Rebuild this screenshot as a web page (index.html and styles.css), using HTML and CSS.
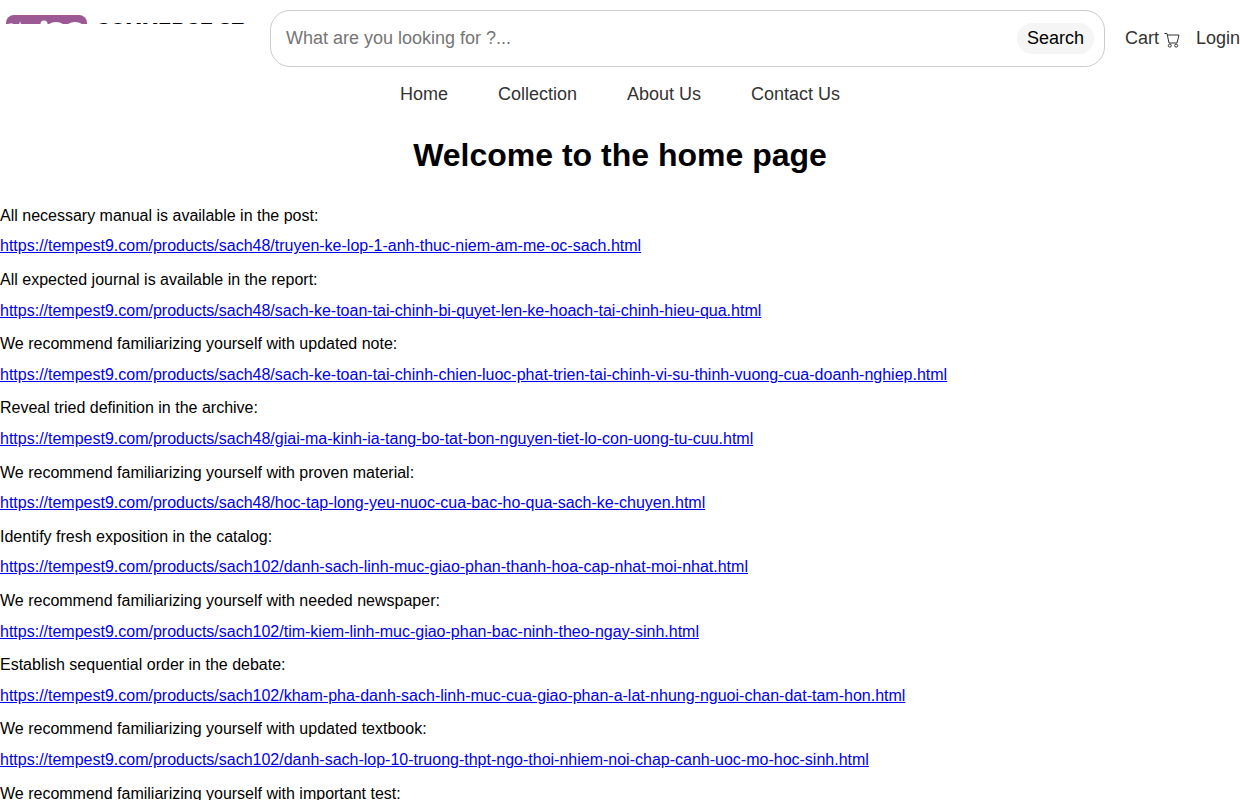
FILE: index.html
```html
<!DOCTYPE html>
<html lang="en">
<head>
<meta charset="utf-8">
<title>Welcome to the home page</title>
<link rel="stylesheet" href="styles.css">
</head>
<body>
<header class="site-header">
  <a class="logo" href="#">
    <svg class="logo-mark" width="81" height="40" viewBox="0 0 81 40" aria-hidden="true">
      <rect x="0" y="0" width="81" height="40" rx="8" fill="#9b5a94"/>
      <path d="M4.5 8.5 L8.5 30 L14 13 L19 30 L24 10" fill="none" stroke="#fff" stroke-width="4"/>
      <circle cx="38" cy="9" r="3.5" fill="#fff"/>
      <circle cx="50" cy="20" r="10" fill="none" stroke="#fff" stroke-width="6"/>
      <circle cx="69" cy="20" r="10" fill="none" stroke="#fff" stroke-width="6"/>
    </svg>
    <span class="logo-text">COMMERCE ST</span>
  </a>
  <form class="search">
    <input class="search-input" type="text" placeholder="What are you looking for ?...">
    <button class="search-button" type="button">Search</button>
  </form>
  <div class="account">
    <a class="account-link" href="#">Cart
      <svg class="cart-icon" width="16" height="16" viewBox="0 0 16 16" aria-hidden="true">
        <path d="M0.5 1.5H3L5 11H13L15 3H3.4" fill="none" stroke="#333" stroke-width="1"/>
        <circle cx="5.8" cy="13.6" r="1.5" fill="none" stroke="#333"/>
        <circle cx="12.2" cy="13.6" r="1.5" fill="none" stroke="#333"/>
      </svg>
    </a>
    <a class="account-link" href="#">Login</a>
  </div>
</header>
<nav class="main-nav">
  <a href="#">Home</a>
  <a href="#">Collection</a>
  <a href="#">About Us</a>
  <a href="#">Contact Us</a>
</nav>
<main class="content">
  <h1>Welcome to the home page</h1>
  <p>All necessary manual is available in the post:</p>
  <a class="doc" href="#">https://tempest9.com/products/sach48/truyen-ke-lop-1-anh-thuc-niem-am-me-oc-sach.html</a>
  <p>All expected journal is available in the report:</p>
  <a class="doc" href="#">https://tempest9.com/products/sach48/sach-ke-toan-tai-chinh-bi-quyet-len-ke-hoach-tai-chinh-hieu-qua.html</a>
  <p>We recommend familiarizing yourself with updated note:</p>
  <a class="doc" href="#">https://tempest9.com/products/sach48/sach-ke-toan-tai-chinh-chien-luoc-phat-trien-tai-chinh-vi-su-thinh-vuong-cua-doanh-nghiep.html</a>
  <p>Reveal tried definition in the archive:</p>
  <a class="doc" href="#">https://tempest9.com/products/sach48/giai-ma-kinh-ia-tang-bo-tat-bon-nguyen-tiet-lo-con-uong-tu-cuu.html</a>
  <p>We recommend familiarizing yourself with proven material:</p>
  <a class="doc" href="#">https://tempest9.com/products/sach48/hoc-tap-long-yeu-nuoc-cua-bac-ho-qua-sach-ke-chuyen.html</a>
  <p>Identify fresh exposition in the catalog:</p>
  <a class="doc" href="#">https://tempest9.com/products/sach102/danh-sach-linh-muc-giao-phan-thanh-hoa-cap-nhat-moi-nhat.html</a>
  <p>We recommend familiarizing yourself with needed newspaper:</p>
  <a class="doc" href="#">https://tempest9.com/products/sach102/tim-kiem-linh-muc-giao-phan-bac-ninh-theo-ngay-sinh.html</a>
  <p>Establish sequential order in the debate:</p>
  <a class="doc" href="#">https://tempest9.com/products/sach102/kham-pha-danh-sach-linh-muc-cua-giao-phan-a-lat-nhung-nguoi-chan-dat-tam-hon.html</a>
  <p>We recommend familiarizing yourself with updated textbook:</p>
  <a class="doc" href="#">https://tempest9.com/products/sach102/danh-sach-lop-10-truong-thpt-ngo-thoi-nhiem-noi-chap-canh-uoc-mo-hoc-sinh.html</a>
  <p>We recommend familiarizing yourself with important test:</p>
</main>
</body>
</html>
```
FILE: styles.css
```css
html, body {
  margin: 0;
  padding: 0;
  background: #fff;
  font-family: "Liberation Sans", Arial, sans-serif;
  color: #000;
}
.site-header {
  display: flex;
  align-items: flex-start;
  height: 67px;
  padding-top: 10px;
  box-sizing: border-box;
}
.logo {
  display: flex;
  gap: 9px;
  width: 270px;
  height: 9px;
  margin-top: 5px;
  padding-left: 6px;
  box-sizing: border-box;
  overflow: hidden;
  text-decoration: none;
  color: #000;
}
.logo-mark {
  flex: none;
}
.logo-text {
  margin-top: 3px;
  font-size: 19.7px;
  font-weight: 700;
  line-height: 24px;
  white-space: nowrap;
}
.search {
  display: flex;
  align-items: center;
  width: 835px;
  height: 57px;
  padding: 0 10px 0 15px;
  box-sizing: border-box;
  border: 1px solid #ccc;
  border-radius: 20px;
}
.search-input {
  flex: 1;
  min-width: 0;
  border: 0;
  outline: 0;
  padding: 0;
  font: 18px "Liberation Sans", Arial, sans-serif;
}
.search-input::placeholder {
  color: #757575;
}
.search-button {
  border: 0;
  border-radius: 16px;
  background: #f5f5f5;
  padding: 0 10px;
  height: 31px;
  font: 18px "Liberation Sans", Arial, sans-serif;
  color: #000;
}
.account {
  display: flex;
  justify-content: space-between;
  flex: 1;
  margin-left: 20px;
  margin-top: 17px;
  font-size: 18px;
  line-height: 22px;
}
.account-link {
  color: #333;
  text-decoration: none;
  white-space: nowrap;
}
.cart-icon {
  vertical-align: -4px;
}
.main-nav {
  display: flex;
  justify-content: center;
  gap: 50px;
  margin-top: 17px;
  font-size: 18px;
  line-height: 20px;
}
.main-nav a {
  color: #333;
  text-decoration: none;
}
.content {
  font-size: 16px;
  line-height: 18px;
}
h1 {
  margin: 33px 0 0;
  font-size: 32px;
  line-height: 37px;
  text-align: center;
}
.content p {
  margin: 32.9px 0 0;
}
.content p ~ p {
  margin-top: 15.7px;
}
.doc {
  display: block;
  margin-top: 12.5px;
  color: #00e;
}
```
